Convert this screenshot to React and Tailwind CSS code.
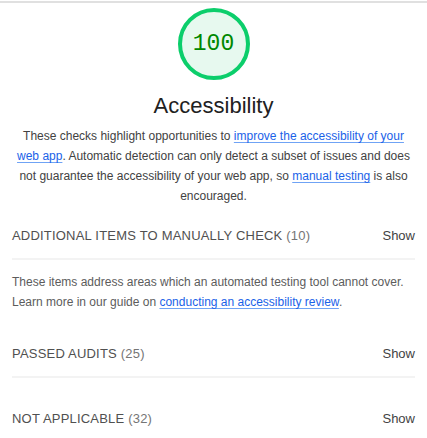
export default function App() {
  const link = "text-[#1a62e8] underline decoration-[#6fa3f5] underline-offset-2";
  const font = { fontFamily: '"Liberation Sans", Arial, sans-serif' };
  return (
    <div className="w-[427px] h-[438px] bg-white overflow-hidden" style={font}>
      <div className="border-t-2 border-[#e0e0e0] mt-px" />
      <div className="flex flex-col items-center">
        <div className="mt-[5px] w-[72px] h-[72px] rounded-full border-[4px] border-[#0cce6b] bg-[#e7f9ef] flex items-center justify-center">
          <span className="text-[#008800] text-[23px] leading-none" style={{ fontFamily: '"Liberation Mono", monospace' }}>100</span>
        </div>
        <h2 className="mt-[12px] text-[22px] leading-[28px] text-[#212121]">Accessibility</h2>
        <p className="mt-[6px] px-[16px] text-center text-[12px] leading-[20px] text-[#424242]">
          These checks highlight opportunities to <span className={link}>improve the accessibility of your web app</span>. Automatic detection can only detect a subset of issues and does not guarantee the accessibility of your web app, so <span className={link}>manual testing</span> is also encouraged.
        </p>
      </div>
      <div className="px-3 mt-[18px]">
        <div className="flex justify-between items-center h-[24px] text-[13px]">
          <span className="tracking-[0.2px] text-[#505050]">ADDITIONAL ITEMS TO MANUALLY CHECK <span className="text-[#757575]">(10)</span></span>
          <span className="text-[#424242]">Show</span>
        </div>
        <div className="mt-[10px] border-t-2 border-[#f3f3f3]" />
        <p className="mt-[12px] text-[12px] leading-[20px] text-[#5c5c5c]">
          These items address areas which an automated testing tool cannot cover. Learn more in our guide on <span className={link}>conducting an accessibility review</span>.
        </p>
        <div className="mt-[30px] flex justify-between items-center h-[24px] text-[13px]">
          <span className="tracking-[0.2px] text-[#505050]">PASSED AUDITS <span className="text-[#757575]">(25)</span></span>
          <span className="text-[#424242]">Show</span>
        </div>
        <div className="mt-[10px] border-t-2 border-[#f3f3f3]" />
        <div className="mt-[29px] flex justify-between items-center h-[24px] text-[13px]">
          <span className="tracking-[0.2px] text-[#505050]">NOT APPLICABLE <span className="text-[#757575]">(32)</span></span>
          <span className="text-[#424242]">Show</span>
        </div>
      </div>
    </div>
  );
}
